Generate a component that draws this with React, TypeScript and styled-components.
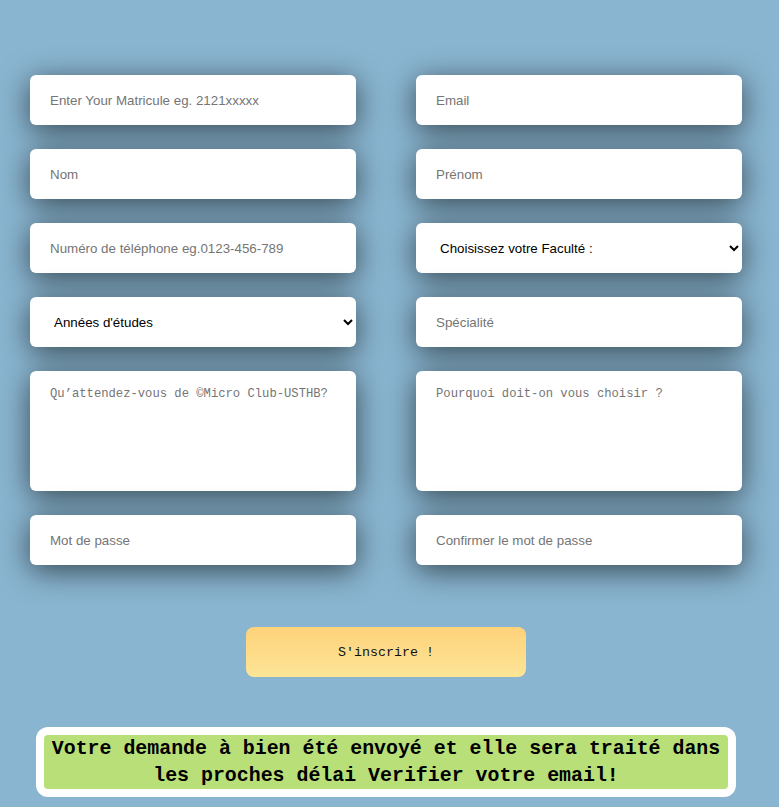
import React from "react";
import styled, { createGlobalStyle } from "styled-components";

const GlobalStyle = createGlobalStyle`
  html, body {
    margin: 0;
    padding: 0;
    background: #89b5d0;
  }
  body {
    font-family: "Liberation Sans", Arial, sans-serif;
  }
  * {
    box-sizing: border-box;
  }
`;

const App = () => {
  return (
    <>
      <GlobalStyle />
      <Page>
        <Form>
          <Field type="text" placeholder="Enter Your Matricule eg. 2121xxxxx" />
          <Field type="email" placeholder="Email" />
          <Field type="text" placeholder="Nom" />
          <Field type="text" placeholder="Prénom" />
          <Field type="tel" placeholder="Numéro de téléphone eg.0123-456-789" />
          <Select defaultValue="">
            <option value="">Choisissez votre Faculté :</option>
          </Select>
          <Select defaultValue="">
            <option value="">Années d'études</option>
          </Select>
          <Field type="text" placeholder="Spécialité" />
          <Area placeholder="Qu’attendez-vous de ©Micro Club-USTHB?" />
          <Area placeholder="Pourquoi doit-on vous choisir ?" />
          <Field type="password" placeholder="Mot de passe" />
          <Field type="password" placeholder="Confirmer le mot de passe" />
        </Form>
        <Footer>
          <Submit type="button">S'inscrire !</Submit>
          <Message>
            <MessageText>
              Votre demande à bien été envoyé et elle sera traité dans les
              proches délai Verifier votre email!
            </MessageText>
          </Message>
        </Footer>
      </Page>
    </>
  );
};

export default App;

const Page = styled.div`
  width: 779px;
  min-height: 807px;
  padding: 75px 0 0 30px;
`;

const Form = styled.form`
  display: grid;
  grid-template-columns: 326px 326px;
  column-gap: 60px;
  row-gap: 24px;
  width: 712px;
`;

const fieldBase = `
  width: 100%;
  border: none;
  outline: none;
  border-radius: 6px;
  background: #fff;
  box-shadow: 0 6px 30px rgba(0, 0, 0, 0.6);
`;

const Field = styled.input`
  ${fieldBase}
  height: 50px;
  padding: 0 20px;
  font-family: "Liberation Sans", Arial, sans-serif;
  font-size: 13.33px;
  color: #222;

  &::placeholder {
    color: #757575;
  }
`;

const Select = styled.select`
  ${fieldBase}
  height: 50px;
  padding: 0 2px 0 20px;
  font-family: "Liberation Sans", Arial, sans-serif;
  font-size: 13.33px;
  color: #000;
`;

const Area = styled.textarea`
  ${fieldBase}
  height: 120px;
  padding: 16px 20px;
  resize: none;
  font-family: "Liberation Mono", "DejaVu Sans Mono", monospace;
  font-size: 12.2px;

  &::placeholder {
    color: #757575;
  }
`;

const Footer = styled.div`
  width: 712px;
  display: flex;
  flex-direction: column;
  align-items: center;
  padding-top: 62px;
`;

const Submit = styled.button`
  width: 280px;
  height: 50px;
  border: none;
  border-radius: 8px;
  background: linear-gradient(to bottom, #fed27a, #fde597);
  font-family: "Liberation Mono", "DejaVu Sans Mono", monospace;
  font-size: 13.3px;
  color: #111;
  cursor: pointer;
`;

const Message = styled.div`
  margin-top: 50px;
  width: 700px;
  padding: 8px;
  background: #fff;
  border-radius: 12px;
`;

const MessageText = styled.p`
  margin: 0;
  padding: 0;
  background: #b9df78;
  border-radius: 4px;
  text-align: center;
  font-family: "Liberation Mono", "DejaVu Sans Mono", monospace;
  font-weight: bold;
  font-size: 19.9px;
  line-height: 27px;
  color: #000;
`;
